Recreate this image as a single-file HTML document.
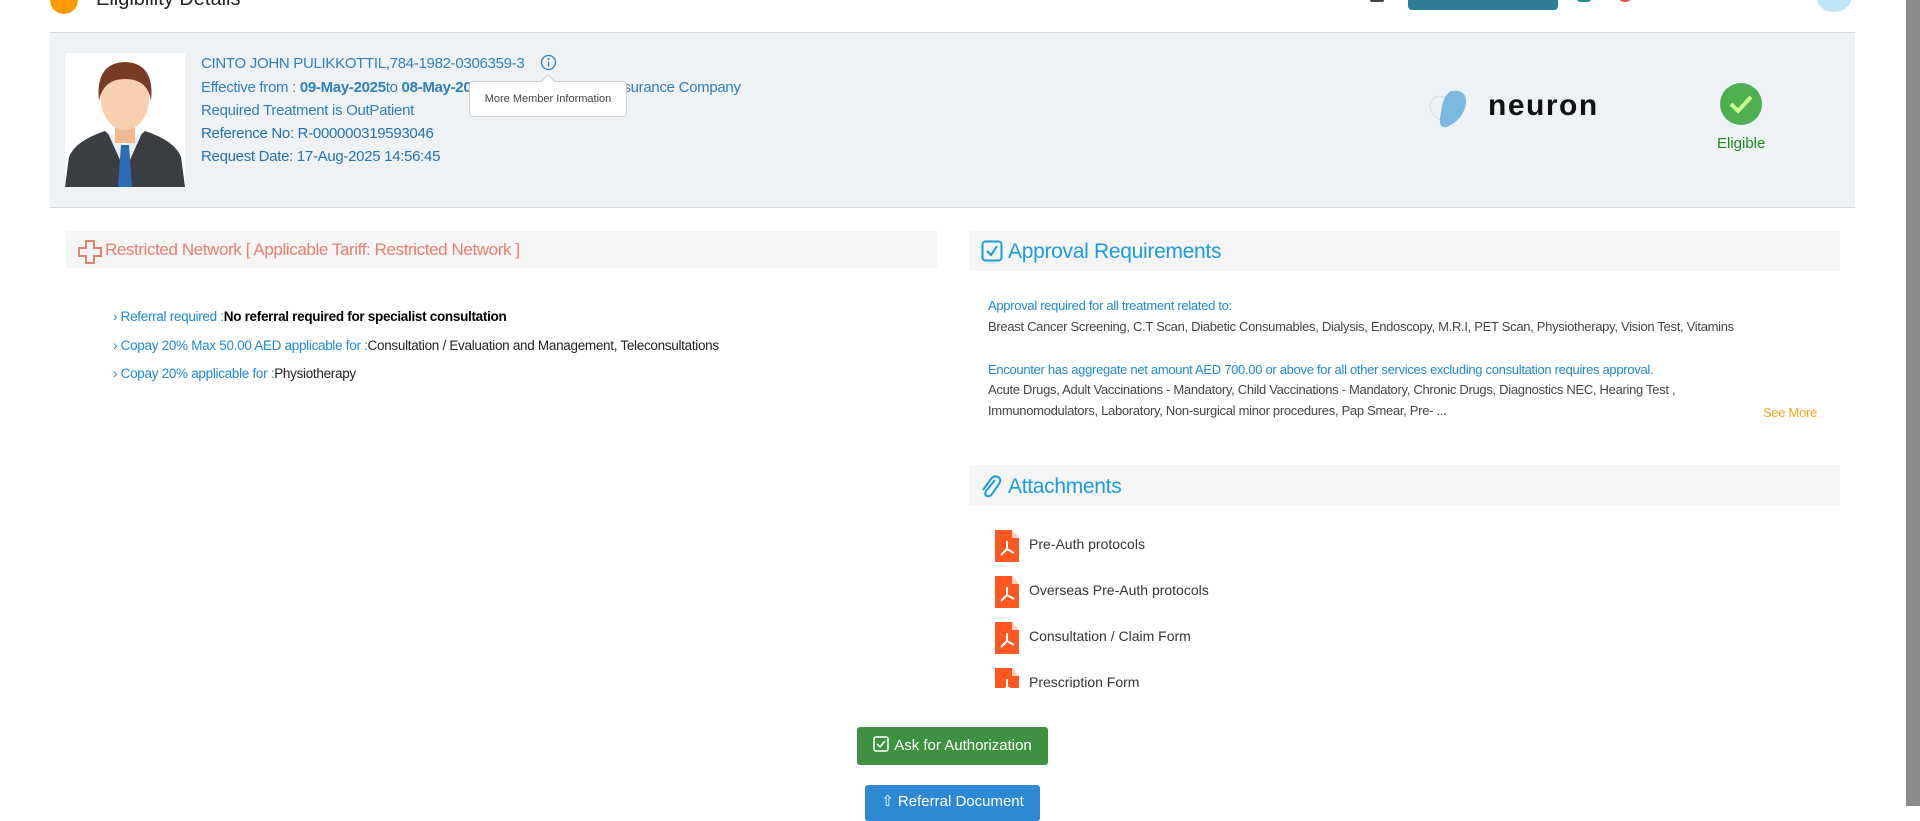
<!DOCTYPE html>
<html><head><meta charset="utf-8"><style>
*{margin:0;padding:0;box-sizing:border-box}
body{width:1920px;height:806px;overflow:hidden;background:#fff;font-family:"Liberation Sans",sans-serif;position:relative}
.a{position:absolute;white-space:nowrap}
.blue{color:#2f7fb8}
.panel{position:absolute;left:50px;top:32px;width:1805px;height:176px;background:#eef2f5;border-top:1px solid #d6d9dc;border-bottom:1px solid #d6d9dc}
.ln{font-size:15px;letter-spacing:-0.3px;color:#2f7fb8}
.hdr{position:absolute;background:#f5f5f5}
.li{font-size:13.5px;letter-spacing:-0.3px}
.ap{font-size:13px;letter-spacing:-0.3px}
.att{font-size:14px;color:#333}
.pdf{position:absolute;width:24px;height:32px}
</style></head><body>
<div class="a" style="left:50px;top:-14px;width:28px;height:28px;border-radius:50%;background:#f90"></div>
<div class="a" style="left:96px;top:-12px;font-size:20px;color:#222">Eligibility Details</div>
<div class="a" style="left:1370px;top:-4px;width:14px;height:6px;background:#444;border-radius:2px"></div>
<div class="a" style="left:1408px;top:-10px;width:150px;height:20px;background:#2c7f97;border-radius:4px"></div>
<div class="a" style="left:1577px;top:-6px;width:14px;height:8px;background:#1a9a8a;border-radius:3px"></div>
<div class="a" style="left:1619px;top:-6px;width:12px;height:8px;background:#e74c3c;border-radius:50%"></div>
<div class="a" style="left:1816px;top:-20px;width:36px;height:32px;background:#bde6fb;border-radius:50%"></div>
<div class="a" style="left:1906px;top:0;width:14px;height:806px;background:#8a8a8a"></div>

<div class="panel"></div>
<svg class="a" style="left:65px;top:53px" width="120" height="134" viewBox="0 0 120 134">
<rect width="120" height="134" fill="#fff"/>
<path d="M0 134 L4 104 Q10 88 40 78 L60 96 L80 78 Q110 88 116 104 L120 134Z" fill="#3a3d42"/>
<path d="M42 78 L60 118 L78 78 L60 92Z" fill="#e8eef4"/>
<path d="M56 92 L64 92 L67 134 L53 134Z" fill="#2d6cb5"/>
<rect x="50" y="66" width="20" height="24" fill="#f0b98f"/>
<ellipse cx="60" cy="46" rx="24" ry="31" fill="#f9d0ae"/>
<path d="M34 48 Q30 10 60 9 Q90 10 86 48 Q83 26 60 26 Q38 26 34 48Z" fill="#7a3b25"/>
</svg>
<div class="a ln" style="left:201px;top:55px">CINTO JOHN PULIKKOTTIL,784-1982-0306359-3</div>
<svg class="a" style="left:540px;top:54px" width="17" height="17" viewBox="0 0 17 17"><circle cx="8.5" cy="8.5" r="7" fill="none" stroke="#2f7fb8" stroke-width="1.3"/><circle cx="8.5" cy="5" r="1" fill="#2f7fb8"/><path d="M8.5 7.5v5" stroke="#2f7fb8" stroke-width="1.4"/></svg>
<div class="a ln" style="left:201px;top:79px">Effective from : <b style="font-weight:600">09-May-2025</b>to <b style="font-weight:600">08-May-2026</b> - Orient &amp; General Insurance Company</div>
<div class="a ln" style="left:201px;top:102px">Required Treatment is OutPatient</div>
<div class="a ln" style="left:201px;top:125px;color:#2672ad">Reference No: R-000000319593046</div>
<div class="a ln" style="left:201px;top:148px;color:#2672ad">Request Date: 17-Aug-2025 14:56:45</div>
<div class="a" style="left:469px;top:81px;width:158px;height:36px;background:#fff;border:1px solid #ccc;border-radius:4px;font-size:11px;color:#444;text-align:center;line-height:34px">More Member Information</div>
<div class="a" style="left:543px;top:76px;width:10px;height:10px;background:#fff;border-left:1px solid #ccc;border-top:1px solid #ccc;transform:rotate(45deg)"></div>

<svg class="a" style="left:1427px;top:89px" width="50" height="40" viewBox="0 0 50 40"><path d="M18 8 Q6 4 3 16 Q3 28 18 32" fill="none" stroke="#c9dff0" stroke-width="1"/><path d="M24 2 Q40 0 39 14 Q37 30 20 38 Q10 40 14 24 Q16 6 24 2Z" fill="#7cb9e0"/></svg>
<div class="a" style="left:1488px;top:89px;font-size:30px;font-weight:bold;letter-spacing:1.5px;color:#111">neuron</div>
<svg class="a" style="left:1720px;top:83px" width="42" height="42" viewBox="0 0 42 42"><circle cx="21" cy="21" r="21" fill="#4caf50"/><path d="M11 21 L18 28 L31 14" fill="none" stroke="#ccff90" stroke-width="4"/></svg>
<div class="a" style="left:1717px;top:135px;font-size:15px;color:#1a8a1a">Eligible</div>

<div class="hdr" style="left:66px;top:231px;width:871px;height:37px"></div>
<svg class="a" style="left:78px;top:240px" width="24" height="24" viewBox="0 0 24 24"><path d="M8 1h8v7h7v8h-7v7H8v-7H1V8h7z" fill="none" stroke="#e8806f" stroke-width="2"/></svg>
<div class="a" style="left:105px;top:240px;font-size:17px;letter-spacing:-0.4px;color:#e5806f">Restricted Network [ Applicable Tariff: Restricted Network ]</div>
<div class="a li" style="left:113px;top:309px"><span style="color:#1d8ad4">›&nbsp;Referral required :</span><b style="color:#000">No referral required for specialist consultation</b></div>
<div class="a li" style="left:113px;top:338px"><span style="color:#1d8ad4">›&nbsp;Copay 20% Max 50.00 AED applicable for :</span><span style="color:#222">Consultation / Evaluation and Management, Teleconsultations</span></div>
<div class="a li" style="left:113px;top:366px"><span style="color:#1d8ad4">›&nbsp;Copay 20% applicable for :</span><span style="color:#222">Physiotherapy</span></div>

<div class="hdr" style="left:969px;top:231px;width:871px;height:40px"></div>
<svg class="a" style="left:981px;top:240px" width="22" height="22" viewBox="0 0 22 22"><rect x="1.5" y="1.5" width="19" height="19" rx="3" fill="none" stroke="#1a9de0" stroke-width="2"/><path d="M6 11l4 4 6-9" fill="none" stroke="#1a9de0" stroke-width="2"/></svg>
<div class="a" style="left:1008px;top:240px;font-size:21px;letter-spacing:-0.3px;color:#1a9de0">Approval Requirements</div>
<div class="a ap" style="left:988px;top:298px;color:#1d8ad4">Approval required for all treatment related to:</div>
<div class="a ap" style="left:988px;top:319px;color:#444">Breast Cancer Screening, C.T Scan, Diabetic Consumables, Dialysis, Endoscopy, M.R.I, PET Scan, Physiotherapy, Vision Test, Vitamins</div>
<div class="a ap" style="left:988px;top:362px;color:#1d8ad4">Encounter has aggregate net amount AED 700.00 or above for all other services excluding consultation requires approval.</div>
<div class="a ap" style="left:988px;top:382px;color:#444">Acute Drugs, Adult Vaccinations - Mandatory, Child Vaccinations - Mandatory, Chronic Drugs, Diagnostics NEC, Hearing Test ,</div>
<div class="a ap" style="left:988px;top:403px;color:#444">Immunomodulators, Laboratory, Non-surgical minor procedures, Pap Smear, Pre- ...</div>
<div class="a ap" style="left:1763px;top:405px;color:#f5a623">See More</div>

<div class="hdr" style="left:969px;top:465px;width:871px;height:41px"></div>
<svg class="a" style="left:980px;top:474px" width="22" height="26" viewBox="0 0 22 26"><path d="M15 6 L6 17 Q4 21 7 22 Q10 23 12 20 L19 10 Q22 5 18 3 Q14 1 11 5 L3 16" fill="none" stroke="#1a9de0" stroke-width="2"/></svg>
<div class="a" style="left:1008px;top:475px;font-size:21px;letter-spacing:-0.3px;color:#1a9de0">Attachments</div>
<div class="a" style="left:960px;top:520px;width:500px;height:168px;overflow:hidden">
<svg width="0" height="0" style="position:absolute"><defs><g id="p"><path d="M0 0h17l7 8v24H0z" fill="#fe5722"/><path d="M17 0l7 8h-7z" fill="#fbd0c2"/><path d="M12 11v8M12 19l-6 6M12 19l7 4M6 25" stroke="#fff" stroke-width="2" fill="none"/></g></defs></svg>
<svg class="pdf" style="left:35px;top:10px" viewBox="0 0 24 32"><use href="#p"/></svg><div class="a att" style="left:69px;top:16px">Pre-Auth protocols</div>
<svg class="pdf" style="left:35px;top:56px" viewBox="0 0 24 32"><use href="#p"/></svg><div class="a att" style="left:69px;top:62px">Overseas Pre-Auth protocols</div>
<svg class="pdf" style="left:35px;top:102px" viewBox="0 0 24 32"><use href="#p"/></svg><div class="a att" style="left:69px;top:108px">Consultation / Claim Form</div>
<svg class="pdf" style="left:35px;top:148px" viewBox="0 0 24 32"><use href="#p"/></svg><div class="a att" style="left:69px;top:154px">Prescription Form</div>
</div>

<div class="a" style="left:857px;top:727px;width:191px;height:38px;background:#3f9142;border-radius:3px;color:#fff;font-size:15px;line-height:38px;text-align:center"><svg width="16" height="16" viewBox="0 0 16 16" style="vertical-align:-2px;margin-right:5px"><rect x="1" y="1" width="14" height="14" rx="2" fill="none" stroke="#fff" stroke-width="1.5"/><path d="M4 8l3 3 5-6" fill="none" stroke="#fff" stroke-width="1.5"/></svg>Ask for Authorization</div>
<div class="a" style="left:865px;top:785px;width:175px;height:36px;background:#2e88d4;border-radius:3px;color:#fff;font-size:15px;line-height:34px;text-align:center">⇧ Referral Document</div>
</body></html>
